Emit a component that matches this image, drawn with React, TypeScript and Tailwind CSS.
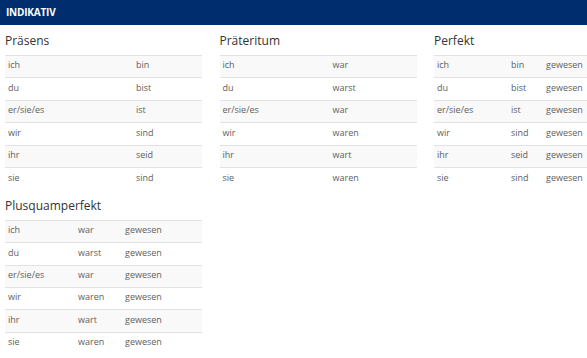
const praesens = [
  ["ich", "bin"],
  ["du", "bist"],
  ["er/sie/es", "ist"],
  ["wir", "sind"],
  ["ihr", "seid"],
  ["sie", "sind"],
];

const praeteritum = [
  ["ich", "war"],
  ["du", "warst"],
  ["er/sie/es", "war"],
  ["wir", "waren"],
  ["ihr", "wart"],
  ["sie", "waren"],
];

const perfekt = [
  ["ich", "bin", "gewesen"],
  ["du", "bist", "gewesen"],
  ["er/sie/es", "ist", "gewesen"],
  ["wir", "sind", "gewesen"],
  ["ihr", "seid", "gewesen"],
  ["sie", "sind", "gewesen"],
];

const plusquam = [
  ["ich", "war", "gewesen"],
  ["du", "warst", "gewesen"],
  ["er/sie/es", "war", "gewesen"],
  ["wir", "waren", "gewesen"],
  ["ihr", "wart", "gewesen"],
  ["sie", "waren", "gewesen"],
];

interface TenseProps {
  title: string;
  rows: string[][];
  widths: string[];
}

function Tense({ title, rows, widths }: TenseProps) {
  return (
    <div className="w-[197px]">
      <h3 className="pt-[8px] pb-[6px] text-[12px] leading-[16px] text-[#333]">{title}</h3>
      <table className="w-full table-fixed border-collapse text-[9px] text-[#606060]">
        <colgroup>
          {widths.map((w, i) => (
            <col key={i} className={w} />
          ))}
        </colgroup>
        <tbody>
          {rows.map((r, i) => (
            <tr
              key={i}
              className={`h-[22.4px] border-t border-[#e2e2e2] ${i % 2 === 0 ? "bg-[#f9f9f9]" : "bg-white"}`}
            >
              {r.map((c, j) => (
                <td key={j} className="px-[3px] pb-[3px] whitespace-nowrap align-middle">
                  {c}
                </td>
              ))}
            </tr>
          ))}
        </tbody>
      </table>
    </div>
  );
}

export default function App() {
  return (
    <div
      className="w-[587px] h-[358px] overflow-hidden bg-white"
      style={{ fontFamily: '"Open Sans", "Noto Sans", sans-serif' }}
    >
      <div className="h-[25px] bg-[#002d6e] px-[6px] flex items-center">
        <span className="text-white font-bold text-[10px] tracking-[-0.2px]">INDIKATIV</span>
      </div>
      <div className="grid grid-cols-[197px_197px_197px] gap-x-[17.5px] pl-[5px] w-[640px]">
        <Tense title="Präsens" rows={praesens} widths={["w-[128px]", "w-auto"]} />
        <Tense title="Präteritum" rows={praeteritum} widths={["w-[110px]", "w-auto"]} />
        <Tense title="Perfekt" rows={perfekt} widths={["w-[74px]", "w-[35px]", "w-auto"]} />
        <Tense title="Plusquamperfekt" rows={plusquam} widths={["w-[70px]", "w-[47px]", "w-auto"]} />
      </div>
    </div>
  );
}
